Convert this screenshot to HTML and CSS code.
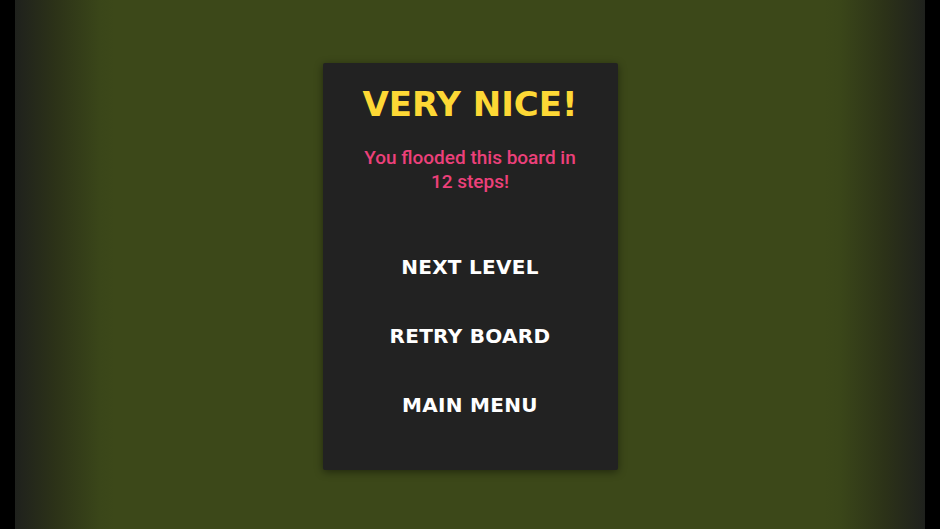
FILE: index.html
```html
<!DOCTYPE html>
<html>
<head>
<meta charset="utf-8">
<link rel="stylesheet" href="styles.css">
</head>
<body>
<div class="stage">
  <div class="card">
    <h1 class="title">VERY NICE!</h1>
    <p class="message">You flooded this board in<br>12 steps!</p>
    <div class="menu">
      <div class="btn">NEXT LEVEL</div>
      <div class="btn">RETRY BOARD</div>
      <div class="btn">MAIN MENU</div>
    </div>
  </div>
</div>
</body>
</html>
```
FILE: styles.css
```css
html, body {
  margin: 0;
  padding: 0;
  background: #000;
  width: 940px;
  height: 529px;
  overflow: hidden;
}
.stage {
  margin: 0 15px;
  height: 529px;
  background: linear-gradient(to right, #1f211d 0px, #2c3218 40px, #3a4619 85px, #3c4819 100px, #3c4819 810px, #3a4619 825px, #2c3218 870px, #1f211d 910px);
  display: flex;
  justify-content: center;
  align-items: flex-start;
}
.card {
  margin-top: 63px;
  width: 295px;
  height: 407px;
  box-sizing: border-box;
  background: #222222;
  border-radius: 2px;
  box-shadow: 0 2px 8px rgba(0,0,0,0.45);
  display: flex;
  flex-direction: column;
  align-items: center;
  padding-top: 21px;
}
.title {
  margin: 0;
  font-family: "DejaVu Sans", "Liberation Sans", sans-serif;
  font-weight: 700;
  font-size: 34px;
  line-height: 40px;
  color: #fdd835;
}
.message {
  margin: 22px 0 0;
  font-family: Roboto, "Liberation Sans", sans-serif;
  font-weight: 500;
  font-size: 19px;
  line-height: 24px;
  color: #ec407a;
  text-align: center;
}
.menu {
  margin-top: 59px;
  display: flex;
  flex-direction: column;
  align-items: center;
  gap: 41px;
}
.btn {
  font-family: "DejaVu Sans", "Liberation Sans", sans-serif;
  font-weight: 700;
  font-size: 20px;
  line-height: 28px;
  color: #ffffff;
  letter-spacing: 0.3px;
}
```
